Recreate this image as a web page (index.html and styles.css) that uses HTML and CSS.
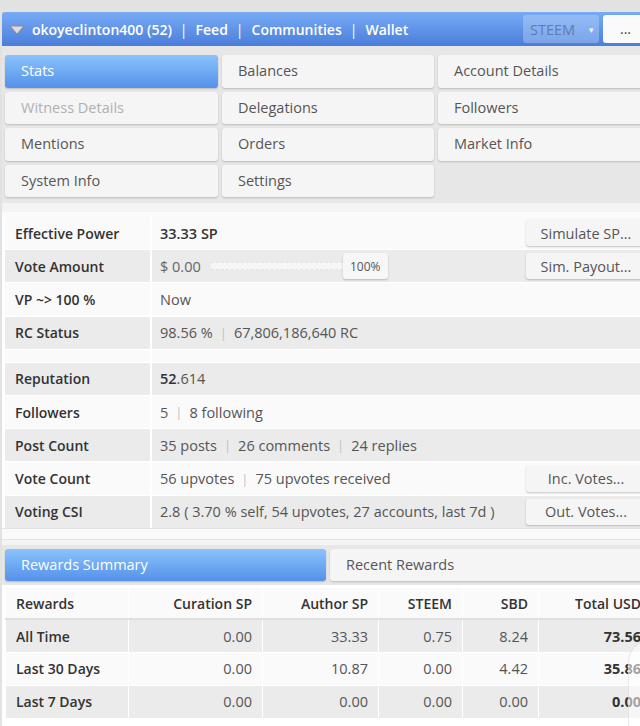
FILE: index.html
```html
<!DOCTYPE html>
<html lang="en">
<head>
<meta charset="utf-8">
<title>SteemWorld - okoyeclinton400</title>
<link rel="stylesheet" href="styles.css">
</head>
<body>
<div class="app">
  <header class="topbar">
    <nav class="nav">
      <svg class="caret" width="16" height="10" viewBox="0 0 16 10"><polygon points="1,1 15,1 8,9" fill="#dcdcdc" stroke="#8a8a8a" stroke-width="1" stroke-linejoin="round"/></svg>
      <span class="nav-link">okoyeclinton400 (52)</span>
      <span class="sep">|</span>
      <span class="nav-link">Feed</span>
      <span class="sep">|</span>
      <span class="nav-link">Communities</span>
      <span class="sep">|</span>
      <span class="nav-link">Wallet</span>
    </nav>
    <div class="nav-right">
      <div class="chain">STEEM <span class="chain-caret">▾</span></div>
      <div class="more">...</div>
    </div>
  </header>

  <section class="tabs-panel">
    <div class="tab-grid">
      <div class="tab active">Stats</div>
      <div class="tab">Balances</div>
      <div class="tab">Account Details</div>
      <div class="tab disabled">Witness Details</div>
      <div class="tab">Delegations</div>
      <div class="tab">Followers</div>
      <div class="tab">Mentions</div>
      <div class="tab">Orders</div>
      <div class="tab">Market Info</div>
      <div class="tab">System Info</div>
      <div class="tab">Settings</div>
    </div>
  </section>

  <div class="strip"></div>

  <section class="stats">
    <div class="srow light">
      <div class="k">Effective Power</div>
      <div class="v"><span class="strong">33.33 SP</span><button class="btn">Simulate SP...</button></div>
    </div>
    <div class="srow dark">
      <div class="k">Vote Amount</div>
      <div class="v">
        <span class="muted">$ 0.00</span>
        <div class="slider"><div class="track"></div><div class="thumb">100%</div></div>
        <button class="btn">Sim. Payout...</button>
      </div>
    </div>
    <div class="srow light">
      <div class="k">VP ~&gt; 100 %</div>
      <div class="v">Now</div>
    </div>
    <div class="srow dark">
      <div class="k">RC Status</div>
      <div class="v">98.56 %<span class="pipe">|</span>67,806,186,640 RC</div>
    </div>
    <div class="srow light spacer">
      <div class="k"></div>
      <div class="v"></div>
    </div>
    <div class="srow dark">
      <div class="k">Reputation</div>
      <div class="v"><span class="strong">52</span>.614</div>
    </div>
    <div class="srow light">
      <div class="k">Followers</div>
      <div class="v">5<span class="pipe">|</span>8 following</div>
    </div>
    <div class="srow dark">
      <div class="k">Post Count</div>
      <div class="v">35 posts<span class="pipe">|</span>26 comments<span class="pipe">|</span>24 replies</div>
    </div>
    <div class="srow light">
      <div class="k">Vote Count</div>
      <div class="v">56 upvotes<span class="pipe">|</span>75 upvotes received<button class="btn">Inc. Votes...</button></div>
    </div>
    <div class="srow dark">
      <div class="k">Voting CSI</div>
      <div class="v">2.8 ( 3.70 % self, 54 upvotes, 27 accounts, last 7d )<button class="btn">Out. Votes...</button></div>
    </div>
  </section>

  <div class="strip strip-2"></div>

  <section class="rtabs-panel">
    <div class="rtabs">
      <div class="tab active">Rewards Summary</div>
      <div class="tab">Recent Rewards</div>
    </div>
  </section>

  <section class="rewards-wrap">
    <table class="rewards">
      <colgroup>
        <col class="c1"><col class="c2"><col class="c3"><col class="c4"><col class="c5"><col class="c6">
      </colgroup>
      <thead>
        <tr><th class="l">Rewards</th><th>Curation SP</th><th>Author SP</th><th>STEEM</th><th>SBD</th><th>Total USD</th></tr>
      </thead>
      <tbody>
        <tr class="dark"><td class="l">All Time</td><td>0.00</td><td>33.33</td><td>0.75</td><td>8.24</td><td class="b">73.56</td></tr>
        <tr class="light"><td class="l">Last 30 Days</td><td>0.00</td><td>10.87</td><td>0.00</td><td>4.42</td><td class="b">35.86</td></tr>
        <tr class="dark"><td class="l">Last 7 Days</td><td>0.00</td><td>0.00</td><td>0.00</td><td>0.00</td><td class="b">0.00</td></tr>
      </tbody>
    </table>
  </section>
  <div class="floating"></div>
</div>
</body>
</html>
```

FILE: styles.css
```css
* { box-sizing: border-box; }
html, body { margin: 0; padding: 0; }
body {
  background: #e2e2e2;
  font-family: "Open Sans", "DejaVu Sans", sans-serif;
  color: #555;
  overflow: hidden;
  width: 640px;
  height: 726px;
}
.app {
  position: relative;
  width: 652px;
  margin-left: 2px;
  padding-top: 12px;
}

/* top bar */
.topbar {
  height: 34px;
  display: flex;
  align-items: center;
  justify-content: space-between;
  background: linear-gradient(#78abf5, #4a7edb);
  border-radius: 3px 0 0 0;
  padding-left: 7px;
}
.nav { display: flex; align-items: center; color: #fff; font-size: 14px; font-weight: 600; }
.caret { margin-right: 7px; margin-top: 1px; }
.sep { font-weight: 400; margin: 0 8px; }
.nav-right { display: flex; align-items: center; height: 100%; margin-right: 3px; }
.chain {
  width: 76px;
  height: 28px;
  background: rgba(200, 220, 250, 0.38);
  border-radius: 3px;
  color: #5b7db5;
  font-size: 14.5px;
  display: flex;
  align-items: center;
  padding-left: 7px;
  margin-right: 4px;
}
.chain-caret { font-size: 9px; margin-left: 14px; color: #eef4fd; }
.more {
  width: 48px;
  height: 28px;
  background: #fafafa;
  border-radius: 3px;
  color: #444;
  font-size: 14px;
  padding-left: 17px;
  line-height: 28px;
}

/* tabs */
.tabs-panel {
  background: #e7e7e7;
  padding: 9px 3px 6px 3px;
}
.tab-grid {
  display: grid;
  grid-template-columns: 213px 212px 213px;
  grid-auto-rows: 32.5px;
  gap: 4px 4px;
}
.tab {
  background: #f5f5f5;
  border-radius: 3px;
  box-shadow: 0 1px 2px rgba(0, 0, 0, 0.2);
  color: #555;
  font-size: 14.5px;
  display: flex;
  align-items: center;
  padding-left: 16px;
  padding-bottom: 1px;
}
.tab.active {
  background: linear-gradient(#8ac3fb, #5591ea);
  color: #fff;
}
.tab.disabled { color: #b0b0b0; }

.strip {
  height: 14px;
  background: linear-gradient(#f4f4f4 0, #f4f4f4 9px, #fbfbfb 9px);
}

/* stats */
.stats {
  background: #fff;
  padding: 0 0 0 3px;
}
.srow { display: flex; height: 32px; margin-bottom: 1.2px; }
.srow.spacer { height: 12px; }
.srow .k {
  width: 145px;
  flex: none;
  margin-right: 2px;
  padding-left: 10px;
  display: flex;
  align-items: center;
  color: #333;
  font-size: 14px;
  font-weight: 600;
}
.srow .v {
  flex: 1;
  display: flex;
  align-items: center;
  padding-left: 8px;
  padding-right: 8px;
  font-size: 14.5px;
  color: #555;
}
.srow.light .k, .srow.light .v { background: #fafafa; }
.srow.dark .k, .srow.dark .v { background: #ebebeb; }
.strong { color: #333; font-weight: 600; }
.muted { color: #666; }
.pipe { color: #c0c0c0; margin: 0 7px; font-size: 13px; }
.btn {
  margin-left: auto;
  width: 120px;
  height: 26px;
  border: 0;
  border-radius: 3px;
  background: #f5f5f5;
  box-shadow: 0 1px 2px rgba(0, 0, 0, 0.22);
  font-family: "Open Sans", "DejaVu Sans", sans-serif;
  font-size: 14.5px;
  color: #555;
  padding: 0;
}
.slider {
  position: relative;
  width: 177px;
  height: 26px;
  margin-left: 10px;
}
.track {
  position: absolute;
  left: 0;
  right: 40px;
  top: 9px;
  height: 8px;
  background: #f6f6f6;
  border-top: 1px dashed #e2e2e2;
  border-bottom: 1px dashed #e2e2e2;
}
.thumb {
  position: absolute;
  right: 0;
  top: 0;
  width: 45px;
  height: 26px;
  background: #f7f7f7;
  border-radius: 3px;
  box-shadow: 0 1px 2px rgba(0, 0, 0, 0.22);
  font-size: 12px;
  color: #555;
  display: flex;
  align-items: center;
  justify-content: center;
}

.strip-2 {
  height: 16px;
  background: linear-gradient(#fafafa 0, #fafafa 10px, #e2e2e2 10px, #e2e2e2 11px, #f4f4f4 11px);
}

/* rewards tabs */
.rtabs-panel {
  background: #e7e7e7;
  padding: 4px 3px 4px 3px;
}
.rtabs {
  display: grid;
  grid-template-columns: 321px 321px;
  gap: 4px;
  height: 32px;
}
.rtabs .tab { padding-left: 16px; }

/* rewards table */
.rewards-wrap {
  background: #fff;
  padding: 2px 0 8px 3px;
}
.rewards {
  border-collapse: collapse;
  width: 646px;
  table-layout: fixed;
  font-size: 14.5px;
}
.c1 { width: 123px; }
.c2 { width: 134px; }
.c3 { width: 116px; }
.c4 { width: 84px; }
.c5 { width: 76px; }
.c6 { width: 113px; }
.rewards th, .rewards td {
  height: 33px;
  padding: 0 10px;
  text-align: right;
  border: 1px solid #fff;
  white-space: nowrap;
}
.rewards th {
  background: #fafafa;
  color: #333;
  font-size: 14px;
  font-weight: 600;
  border-bottom: 2px solid #e0e0e0;
  height: 32px;
}
.rewards .l { text-align: left; color: #333; font-size: 14px; font-weight: 600; }
.rewards tr.dark td { background: #ebebeb; }
.rewards tr.light td { background: #fafafa; }
.rewards td { color: #555; }
.rewards td.b { color: #333; font-weight: 700; }

.floating {
  position: absolute;
  left: 626px;
  top: 640px;
  width: 60px;
  height: 120px;
  border-radius: 22px;
  background: rgba(255, 255, 255, 0.55);
  border: 1px solid rgba(200, 200, 200, 0.4);
}
```
